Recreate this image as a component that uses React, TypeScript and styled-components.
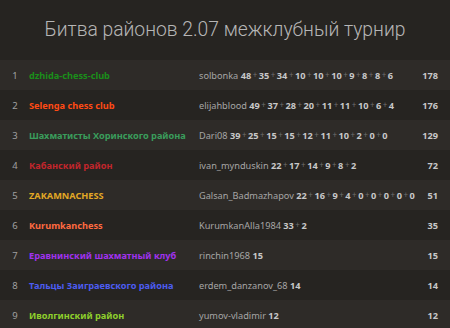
import React from "react";
import styled, { createGlobalStyle } from "styled-components";

const GlobalStyle = createGlobalStyle`
  html, body {
    margin: 0;
    padding: 0;
    background: #262421;
  }
  body {
    font-family: "Noto Sans", "Open Sans", sans-serif;
    overflow: hidden;
  }
`;

const Page = styled.div`
  width: 450px;
  height: 328px;
  background: #262421;
  overflow: hidden;
`;

const Header = styled.h1`
  margin: 0;
  height: 60px;
  display: flex;
  align-items: center;
  justify-content: center;
  font-family: Roboto, "Noto Sans", sans-serif;
  font-weight: 300;
  font-size: 19.3px;
  color: #b6b6b6;
  padding-bottom: 2px;
  box-sizing: border-box;
`;

const Row = styled.div<{ $odd: boolean }>`
  display: grid;
  grid-template-columns: 29px 170px 1fr auto;
  align-items: center;
  height: 30px;
  padding-right: 12px;
  background: ${(p) => (p.$odd ? "#2e2b28" : "#262421")};
  font-size: 9.2px;
`;

const Rank = styled.span`
  color: #a0a0a0;
  font-size: 9.5px;
  text-align: center;
  padding-left: 1px;
`;

const Team = styled.span<{ $color: string }>`
  color: ${(p) => p.$color};
  font-weight: 700;
  white-space: nowrap;
`;

const Players = styled.span`
  color: #a6a6a6;
  white-space: nowrap;
`;

const Pts = styled.strong`
  color: #c8c8c8;
  font-weight: 700;
`;

const Plus = styled.span`
  color: #707070;
  font-size: 8px;
  margin: 0 1.5px;
  vertical-align: 1px;
`;

const Total = styled.span`
  color: #c8c8c8;
  font-weight: 700;
  text-align: right;
`;

const teams = [
  { name: "dzhida-chess-club", color: "#1a8f1a", player: "solbonka", scores: [48, 35, 34, 10, 10, 10, 9, 8, 8, 6], total: 178 },
  { name: "Selenga chess club", color: "#ff4a14", player: "elijahblood", scores: [49, 37, 28, 20, 11, 11, 10, 6, 4], total: 176 },
  { name: "Шахматисты Хоринского района", color: "#3a9d5c", player: "Dari08", scores: [39, 25, 15, 15, 12, 11, 10, 2, 0, 0], total: 129 },
  { name: "Кабанский район", color: "#c2262c", player: "ivan_mynduskin", scores: [22, 17, 14, 9, 8, 2], total: 72 },
  { name: "ZAKAMNACHESS", color: "#e2a825", player: "Galsan_Badmazhapov", scores: [22, 16, 9, 4, 0, 0, 0, 0, 0], total: 51 },
  { name: "Kurumkanchess", color: "#ff6a40", player: "KurumkanAlla1984", scores: [33, 2], total: 35 },
  { name: "Еравнинский шахматный клуб", color: "#a032ee", player: "rinchin1968", scores: [15], total: 15 },
  { name: "Тальцы Заиграевского района", color: "#4c5cf0", player: "erdem_danzanov_68", scores: [14], total: 14 },
  { name: "Иволгинский район", color: "#8fd02c", player: "yumov-vladimir", scores: [12], total: 12 },
];

export default function App() {
  return (
    <Page>
      <GlobalStyle />
      <Header>Битва районов 2.07 межклубный турнир</Header>
      {teams.map((t, i) => (
        <Row key={t.name} $odd={i % 2 === 0}>
          <Rank>{i + 1}</Rank>
          <Team $color={t.color}>{t.name}</Team>
          <Players>
            {t.player}{" "}
            {t.scores.map((s, j) => (
              <React.Fragment key={j}>
                {j > 0 && <Plus>+</Plus>}
                <Pts>{s}</Pts>
              </React.Fragment>
            ))}
          </Players>
          <Total>{t.total}</Total>
        </Row>
      ))}
    </Page>
  );
}
